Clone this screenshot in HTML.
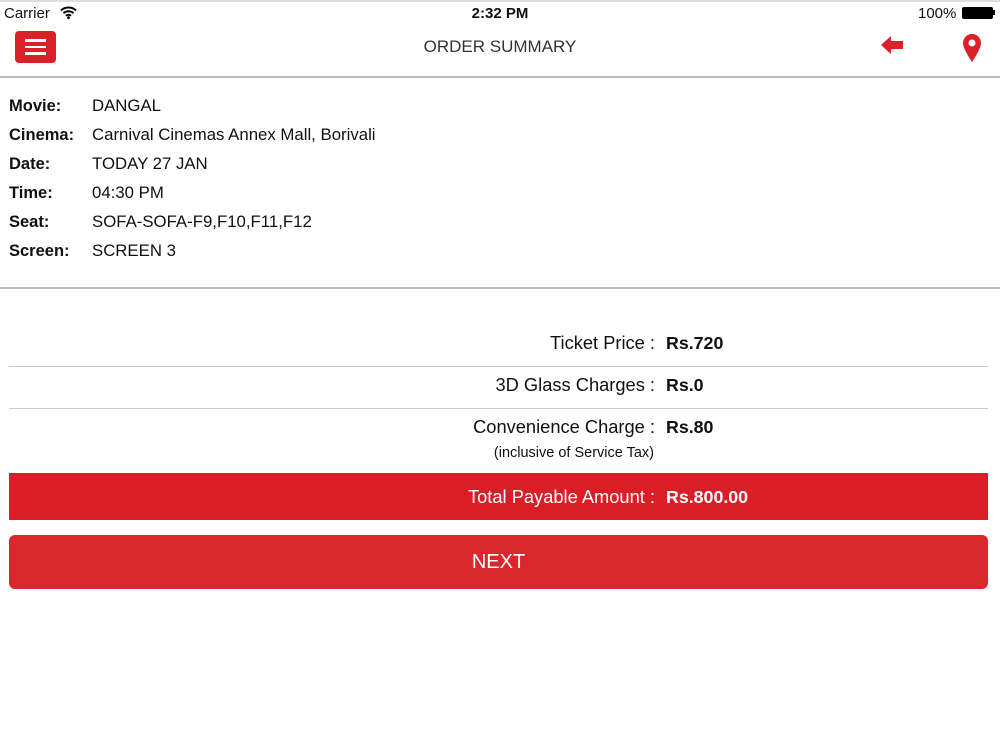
<!DOCTYPE html>
<html><head><style>
*{margin:0;padding:0;box-sizing:border-box}
body{width:1000px;height:750px;background:#fff;font-family:"Liberation Sans",sans-serif;color:#111;position:relative;overflow:hidden}
.a{position:absolute;white-space:nowrap}
.lbl{left:9px;font-weight:bold;font-size:16.5px;line-height:20px}
.val{left:92px;font-size:16.8px;line-height:20px}
.r{right:345px;text-align:right;font-size:18.3px;line-height:22px}
.v{left:666px;font-weight:bold;font-size:17.8px;line-height:22px}
</style></head><body>
<div class="a" style="left:0;top:0;width:1000px;height:2px;background:#ddd"></div>
<div class="a" style="left:4px;top:5px;font-size:15px">Carrier</div>
<svg class="a" style="left:60px;top:6px" width="17" height="13" viewBox="0 0 17 13"><path d="M1 4.5A11 11 0 0 1 16 4.5M3.5 7.2A7.3 7.3 0 0 1 13.5 7.2M6 9.8A3.6 3.6 0 0 1 11 9.8" stroke="#000" stroke-width="2" fill="none"/><circle cx="8.5" cy="11.6" r="1.4"/></svg>
<div class="a" style="left:0;width:1000px;text-align:center;top:5px;font-size:15px;font-weight:bold">2:32 PM</div>
<div class="a" style="left:918px;top:5px;font-size:15px">100%</div>
<div class="a" style="left:962px;top:7px;width:31px;height:12px;background:#000;border-radius:2px"></div>
<div class="a" style="left:993px;top:10px;width:2px;height:5px;background:#000"></div>
<div class="a" style="left:15px;top:31px;width:41px;height:32px;background:#da2128;border-radius:4px"></div>
<div class="a" style="left:25px;top:39px;width:21px;height:2.5px;background:#fff"></div>
<div class="a" style="left:25px;top:45.5px;width:21px;height:2.5px;background:#fff"></div>
<div class="a" style="left:25px;top:52px;width:21px;height:2.5px;background:#fff"></div>
<div class="a" style="left:0;width:1000px;text-align:center;top:37px;font-size:17px;color:#333">ORDER SUMMARY</div>
<svg class="a" style="left:880px;top:35px" width="24" height="20" viewBox="0 0 24 20"><path d="M1 10L11 1V6H23V14H11V19Z" fill="#da2128"/></svg>
<svg class="a" style="left:962px;top:33px" width="20" height="30" viewBox="0 0 20 30"><path d="M10 29C10 29 1 16 1 10A9 9 0 0 1 19 10C19 16 10 29 10 29Z" fill="#da2128"/><circle cx="10" cy="10" r="3.5" fill="#fff"/></svg>
<div class="a" style="left:0;top:76px;width:1000px;height:2px;background:#bbb"></div>
<div class="a lbl" style="top:96px">Movie:</div><div class="a val" style="top:96px">DANGAL</div>
<div class="a lbl" style="top:125px">Cinema:</div><div class="a val" style="top:125px">Carnival Cinemas Annex Mall, Borivali</div>
<div class="a lbl" style="top:154px">Date:</div><div class="a val" style="top:154px">TODAY 27 JAN</div>
<div class="a lbl" style="top:183px">Time:</div><div class="a val" style="top:183px">04:30 PM</div>
<div class="a lbl" style="top:212px">Seat:</div><div class="a val" style="top:212px">SOFA-SOFA-F9,F10,F11,F12</div>
<div class="a lbl" style="top:241px">Screen:</div><div class="a val" style="top:241px">SCREEN 3</div>
<div class="a" style="left:0;top:287px;width:1000px;height:2px;background:#bbb"></div>
<div class="a r" style="top:332px">Ticket Price :</div><div class="a v" style="top:332px">Rs.720</div>
<div class="a" style="left:9px;top:366px;width:979px;height:1px;background:#ccc"></div>
<div class="a r" style="top:374px">3D Glass Charges :</div><div class="a v" style="top:374px">Rs.0</div>
<div class="a" style="left:9px;top:408px;width:979px;height:1px;background:#ccc"></div>
<div class="a r" style="top:416px">Convenience Charge :</div><div class="a v" style="top:416px">Rs.80</div>
<div class="a" style="right:346px;top:445px;font-size:14.5px">(inclusive of Service Tax)</div>
<div class="a" style="left:9px;top:473px;width:979px;height:47px;background:#da1e27"></div>
<div class="a r" style="top:486px;color:#fff">Total Payable Amount :</div><div class="a v" style="top:486px;color:#fff">Rs.800.00</div>
<div class="a" style="left:9px;top:535px;width:979px;height:54px;background:#d8282e;border-radius:6px;color:#fff;font-size:20px;text-align:center;line-height:54px">NEXT</div>
</body></html>
